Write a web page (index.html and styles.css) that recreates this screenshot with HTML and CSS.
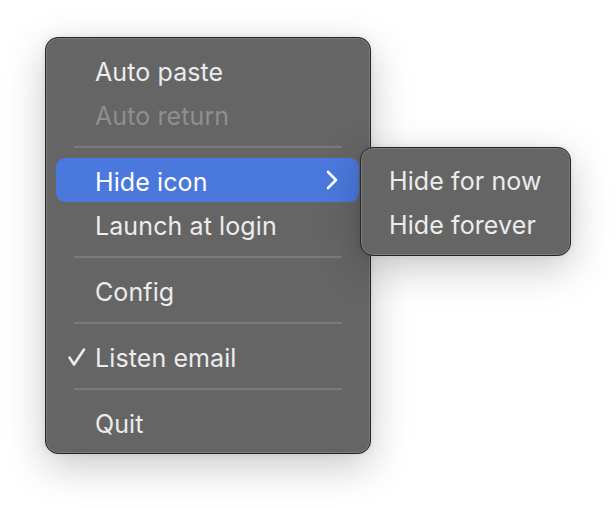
FILE: index.html
```html
<!DOCTYPE html>
<html>
<head>
<meta charset="utf-8">
<link rel="stylesheet" href="styles.css">
</head>
<body>
<div class="stage">
  <div class="menu main">
    <div class="item"><span class="label">Auto paste</span></div>
    <div class="item disabled"><span class="label">Auto return</span></div>
    <div class="sep"></div>
    <div class="item active">
      <span class="label">Hide icon</span>
      <svg class="chev" width="14" height="20" viewBox="0 0 14 20"><path d="M3 2 L11 10 L3 18" fill="none" stroke="#fff" stroke-width="2.6" stroke-linecap="round" stroke-linejoin="round"/></svg>
    </div>
    <div class="item"><span class="label">Launch at login</span></div>
    <div class="sep"></div>
    <div class="item"><span class="label">Config</span></div>
    <div class="sep"></div>
    <div class="item">
      <svg class="check" width="20" height="20" viewBox="0 0 20 20"><path d="M2.5 10.5 L7 17.5 L17 2.5" fill="none" stroke="#ececec" stroke-width="2.6" stroke-linecap="round" stroke-linejoin="round"/></svg>
      <span class="label">Listen email</span>
    </div>
    <div class="sep"></div>
    <div class="item"><span class="label">Quit</span></div>
  </div>
  <div class="menu sub">
    <div class="item"><span class="label">Hide for now</span></div>
    <div class="item"><span class="label">Hide forever</span></div>
  </div>
</div>
</body>
</html>
```
FILE: styles.css
```css
html, body {
  margin: 0;
  padding: 0;
  background: #ffffff;
}
body {
  width: 616px;
  height: 508px;
  overflow: hidden;
  font-family: Inter, "Noto Sans", sans-serif;
}
.stage {
  position: relative;
  padding: 37px 0 0 45px;
}
.menu {
  background: #656565;
  border: 1px solid #242424;
  border-radius: 13px;
  box-shadow: inset 0 0 0 1px #7c7c7c, 0 12px 40px rgba(0, 0, 0, 0.22), 0 0 6px rgba(0, 0, 0, 0.08);
  box-sizing: border-box;
  display: flex;
  flex-direction: column;
}
.main {
  width: 326px;
  height: 417px;
  padding: 10px 11px 0 10px;
}
.sub {
  position: absolute;
  left: 360px;
  top: 147px;
  width: 211px;
  height: 109px;
  padding: 11px 10px 0 10px;
}
.item {
  position: relative;
  height: 44px;
  flex: 0 0 44px;
  display: flex;
  align-items: center;
  padding-left: 39px;
  border-radius: 9px;
  color: #ececec;
  font-size: 25px;
  letter-spacing: 0.1px;
}
.sub .item {
  padding-left: 18px;
}
.item.disabled {
  color: #8f8f8f;
}
.item.active {
  background: #4a78dd;
  color: #ffffff;
}
.label {
  line-height: 1;
  transform: translateY(2px);
}
.sub .label {
  transform: translateY(0px);
}
.chev {
  position: absolute;
  right: 20px;
  top: 12px;
}
.check {
  position: absolute;
  left: 11px;
  top: 13px;
}
.sep {
  flex: 0 0 22px;
  display: flex;
  align-items: center;
  padding: 0 17px 0 18px;
}
.sep::before {
  content: "";
  display: block;
  width: 100%;
  height: 2px;
  background: #7a7a7a;
}
```
